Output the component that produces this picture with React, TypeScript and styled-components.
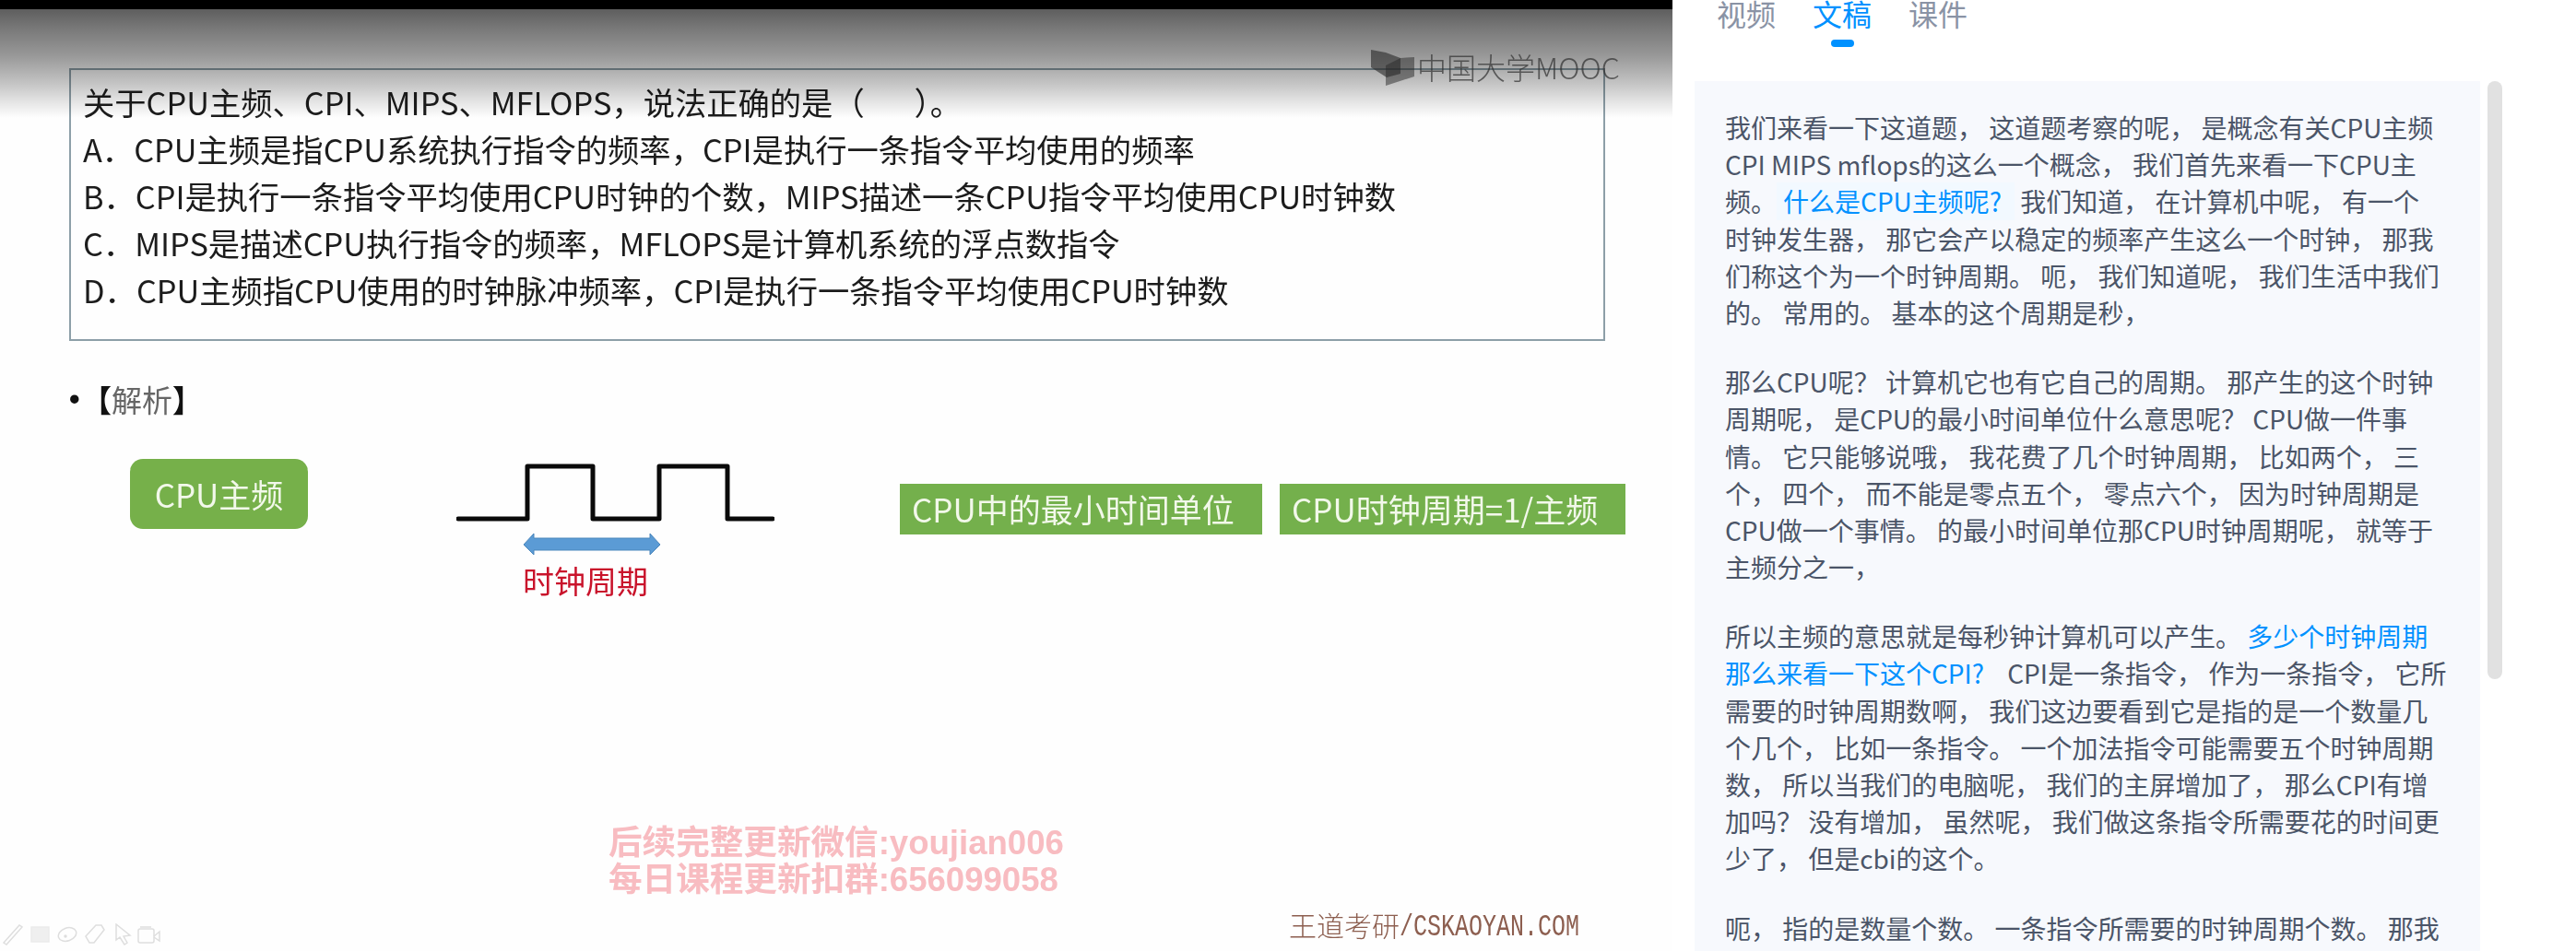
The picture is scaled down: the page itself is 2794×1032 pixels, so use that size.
import styled, { createGlobalStyle } from 'styled-components'

const CJK = `'Noto Sans CJK SC', 'Noto Sans', sans-serif`

const GlobalStyle = createGlobalStyle`
  html, body {
    margin: 0;
    padding: 0;
    width: 2794px;
    height: 1032px;
    overflow: hidden;
    background: #ffffff;
  }
`

const Page = styled.div`
  display: flex;
  width: 2794px;
  height: 1032px;
  overflow: hidden;
  font-family: ${CJK};
`

const Video = styled.section`
  position: relative;
  display: flex;
  flex-direction: column;
  flex: 0 0 1814px;
  height: 1032px;
  overflow: hidden;
  background: #fefefe;
  filter: blur(0.7px);
`

const BlackBar = styled.div`
  flex: 0 0 10px;
  background: #000000;
`

const TopShade = styled.div`
  position: absolute;
  top: 10px;
  left: 0;
  right: 0;
  height: 118px;
  background: linear-gradient(
    to bottom,
    rgba(0, 0, 0, 0.63) 0%,
    rgba(0, 0, 0, 0.53) 17%,
    rgba(0, 0, 0, 0.4) 43%,
    rgba(0, 0, 0, 0.23) 68%,
    rgba(0, 0, 0, 0.1) 85%,
    rgba(0, 0, 0, 0) 100%
  );
`

const MoocLogo = styled.div`
  position: absolute;
  top: 54px;
  left: 1487px;
  display: flex;
  align-items: flex-start;
  gap: 2px;
  color: rgba(50, 50, 50, 0.72);
  font-size: 32px;
  line-height: 36px;
  font-weight: 300;
  white-space: nowrap;
`

const QuestionBox = styled.div`
  box-sizing: border-box;
  width: 1666px;
  height: 296px;
  margin: 64px 0 0 75px;
  padding: 9px 0 0 13px;
  border: 2px solid #8d9fa8;
  color: #1c1c1c;
  font-size: 34.3px;
  line-height: 51px;
  white-space: pre;
`

const Analysis = styled.div`
  display: flex;
  align-items: center;
  height: 50px;
  margin: 38px 0 2px 75px;
  color: #111111;
  font-size: 33px;
  font-weight: 700;
  white-space: nowrap;
`

const Bullet = styled.span`
  width: 13px;
  font-family: 'Liberation Sans', sans-serif;
`

const AnalysisWord = styled.span`
  color: #666666;
  font-weight: 400;
`

const Diagram = styled.div`
  display: flex;
  align-items: flex-start;
  margin: 38px 0 0 141px;
`

const FreqButton = styled.div`
  display: flex;
  align-items: center;
  justify-content: center;
  width: 193px;
  height: 76px;
  padding-bottom: 2px;
  box-sizing: border-box;
  flex: none;
  border-radius: 14px;
  background: #76b04a;
  color: #f2f8ea;
  font-size: 35px;
`

const WaveColumn = styled.div`
  display: flex;
  flex-direction: column;
  width: 345px;
  margin: 3px 0 0 161px;
  flex: none;
`

const PeriodLabel = styled.div`
  margin-left: 72px;
  color: #c9132b;
  font-size: 34px;
  line-height: 44px;
  white-space: nowrap;
`

const GreenBar = styled.div<{ $width: number; $gap: number }>`
  box-sizing: border-box;
  display: flex;
  align-items: center;
  flex: none;
  width: ${p => p.$width}px;
  height: 55px;
  margin: 27px 0 0 ${p => p.$gap}px;
  padding: 0 0 3px 13px;
  background: #74b04c;
  color: #f2f8ea;
  font-size: 35px;
  white-space: nowrap;
`

const Notice = styled.div`
  margin: 243px 0 0 660px;
  color: #f8bcc1;
  font-family: 'Liberation Sans', ${CJK};
  font-size: 36.6px;
  font-weight: 700;
  line-height: 40px;
  white-space: nowrap;
`

const VideoFooter = styled.div`
  display: flex;
  align-items: flex-end;
  justify-content: space-between;
  margin-top: auto;
  padding: 0 101px 4px 3px;
`

const ToolIcons = styled.svg`
  display: block;
  margin-bottom: 2px;
`

const Credit = styled.div`
  color: #8d5f50;
  font-size: 30px;
  font-weight: 300;
  line-height: 36px;
  white-space: nowrap;
`

const CreditLatin = styled.span`
  display: inline-block;
  font-family: 'Liberation Mono', monospace;
  font-size: 25px;
  transform: scaleY(1.3);
  transform-origin: 50% 75%;
`

const Side = styled.aside`
  display: flex;
  flex-direction: column;
  flex: 1;
  min-width: 0;
  height: 1032px;
  padding-left: 24px;
`

const Tabs = styled.div`
  display: flex;
  gap: 40px;
  flex: 0 0 88px;
  padding-left: 24px;
`

const Tab = styled.div<{ $active?: boolean }>`
  display: flex;
  flex-direction: column;
  align-items: center;
  color: ${p => (p.$active ? '#0091ff' : '#8a93a5')};
  font-size: 32px;
  line-height: 29px;
`

const TabMark = styled.span`
  width: 25px;
  height: 8px;
  margin-top: 14px;
  border-radius: 4px;
  background: #0091ff;
`

const TranscriptArea = styled.div`
  display: flex;
  align-items: flex-start;
  gap: 8px;
  flex: 1;
  min-height: 0;
`

const Transcript = styled.div`
  box-sizing: border-box;
  width: 852px;
  height: 100%;
  padding: 30px 0 0 33px;
  overflow: hidden;
  background: #f7f9fd;
  color: #4b5568;
  font-size: 28px;
`

const Paragraph = styled.div`
  margin-bottom: 35px;
`

const Line = styled.div`
  height: 40.2px;
  line-height: 40.2px;
  white-space: pre;
`

const Cue = styled.span<{ $shaded?: boolean }>`
  color: #0091ff;
  ${p => p.$shaded && `
    display: inline-block;
    height: 41px;
    padding: 0 14px 0 7px;
    background: #f2f9ff;
  `}
`

const ScrollThumb = styled.div`
  flex: 0 0 16px;
  height: 649px;
  border-radius: 8px;
  background: #e1e1e1;
`

const transcript = [
  [
    ['我们来看一下这道题， 这道题考察的呢， 是概念有关CPU主频'],
    ['CPI MIPS mflops的这么一个概念， 我们首先来看一下CPU主'],
    ['频。', { shaded: '什么是CPU主频呢?' }, ' 我们知道， 在计算机中呢， 有一个'],
    ['时钟发生器， 那它会产以稳定的频率产生这么一个时钟， 那我'],
    ['们称这个为一个时钟周期。 呃， 我们知道呢， 我们生活中我们'],
    ['的。 常用的。 基本的这个周期是秒，'],
  ],
  [
    ['那么CPU呢？ 计算机它也有它自己的周期。 那产生的这个时钟'],
    ['周期呢， 是CPU的最小时间单位什么意思呢？ CPU做一件事'],
    ['情。 它只能够说哦， 我花费了几个时钟周期， 比如两个， 三'],
    ['个， 四个， 而不能是零点五个， 零点六个， 因为时钟周期是'],
    ['CPU做一个事情。 的最小时间单位那CPU时钟周期呢， 就等于'],
    ['主频分之一，'],
  ],
  [
    ['所以主频的意思就是每秒钟计算机可以产生。 ', { plain: '多少个时钟周期' }],
    [{ plain: '那么来看一下这个CPI?' }, '    CPI是一条指令， 作为一条指令， 它所'],
    ['需要的时钟周期数啊， 我们这边要看到它是指的是一个数量几'],
    ['个几个， 比如一条指令。 一个加法指令可能需要五个时钟周期'],
    ['数， 所以当我们的电脑呢， 我们的主屏增加了， 那么CPI有增'],
    ['加吗？ 没有增加， 虽然呢， 我们做这条指令所需要花的时间更'],
    ['少了， 但是cbi的这个。'],
  ],
  [['呃， 指的是数量个数。 一条指令所需要的时钟周期个数。 那我']],
] as (string | { shaded?: string; plain?: string })[][][]

const questionLines = [
  '关于CPU主频、CPI、MIPS、MFLOPS，说法正确的是（       ）。',
  'A．CPU主频是指CPU系统执行指令的频率，CPI是执行一条指令平均使用的频率',
  'B．CPI是执行一条指令平均使用CPU时钟的个数，MIPS描述一条CPU指令平均使用CPU时钟数',
  'C．MIPS是描述CPU执行指令的频率，MFLOPS是计算机系统的浮点数指令',
  'D．CPU主频指CPU使用的时钟脉冲频率，CPI是执行一条指令平均使用CPU时钟数',
]

export default function App() {
  return (
    <>
      <GlobalStyle />
      <Page>
        <Video>
          <BlackBar />
          <QuestionBox>
            {questionLines.map(line => (
              <div key={line}>{line}</div>
            ))}
          </QuestionBox>
          <Analysis>
            <Bullet>•</Bullet>【<AnalysisWord>解析</AnalysisWord>】
          </Analysis>
          <Diagram>
            <FreqButton>CPU主频</FreqButton>
            <WaveColumn>
              <svg width="345" height="107" viewBox="0 0 345 107">
                <path
                  d="M2 62H77V5H148V62H220V5H294V62H343"
                  fill="none"
                  stroke="#0a0a0a"
                  strokeWidth="5"
                  strokeLinejoin="round"
                  strokeLinecap="round"
                />
                <path
                  d="M73 90L84 78V83H210V78L221 90L210 101V96H84V101Z"
                  fill="#5b9bd5"
                  stroke="#4a86bb"
                />
              </svg>
              <PeriodLabel>时钟周期</PeriodLabel>
            </WaveColumn>
            <GreenBar $width={393} $gap={136}>CPU中的最小时间单位</GreenBar>
            <GreenBar $width={375} $gap={19}>CPU时钟周期=1/主频</GreenBar>
          </Diagram>
          <Notice>
            <div>后续完整更新微信:youjian006</div>
            <div>每日课程更新扣群:656099058</div>
          </Notice>
          <VideoFooter>
            <ToolIcons width="172" height="24" viewBox="0 0 172 24" fill="none" stroke="#dedede" strokeWidth="1.5">
              <path d="M1 21L18 2L21 4L4 23Z" />
              <rect x="31" y="4" width="19" height="16" fill="#efefef" stroke="#ebebeb" />
              <ellipse cx="70" cy="12" rx="10" ry="7" transform="rotate(-20 70 12)" />
              <circle cx="68" cy="14" r="1" fill="#cccccc" />
              <path d="M90 14L101 2H107L110 7L99 21H94Z" />
              <path d="M123 1V18L127 15L132 23L135 21L131 14L138 13Z" />
              <rect x="147" y="6" width="17" height="15" rx="2" />
              <path d="M149 4H161M164 14L170 9V19L164 15" />
            </ToolIcons>
            <Credit>
              王道考研<CreditLatin>/CSKAOYAN.COM</CreditLatin>
            </Credit>
          </VideoFooter>
          <TopShade />
          <MoocLogo>
            <svg width="48" height="40" viewBox="0 0 48 40">
              <path d="M0 0L16 3L32 9V26L17 30L0 19Z" fill="rgba(40,40,40,0.6)" />
              <path d="M16 17L32 9L47 8V29L16 39Z" fill="rgba(40,40,40,0.5)" />
            </svg>
            中国大学MOOC
          </MoocLogo>
        </Video>
        <Side>
          <Tabs>
            <Tab>视频</Tab>
            <Tab $active>
              文稿
              <TabMark />
            </Tab>
            <Tab>课件</Tab>
          </Tabs>
          <TranscriptArea>
            <Transcript>
              {transcript.map((para, i) => (
                <Paragraph key={i}>
                  {para.map((line, j) => (
                    <Line key={j}>
                      {line.map((part, k) =>
                        typeof part === 'string' ? (
                          part
                        ) : (
                          <Cue key={k} $shaded={!!part.shaded}>
                            {part.shaded ?? part.plain}
                          </Cue>
                        ),
                      )}
                    </Line>
                  ))}
                </Paragraph>
              ))}
            </Transcript>
            <ScrollThumb />
          </TranscriptArea>
        </Side>
      </Page>
    </>
  )
}
